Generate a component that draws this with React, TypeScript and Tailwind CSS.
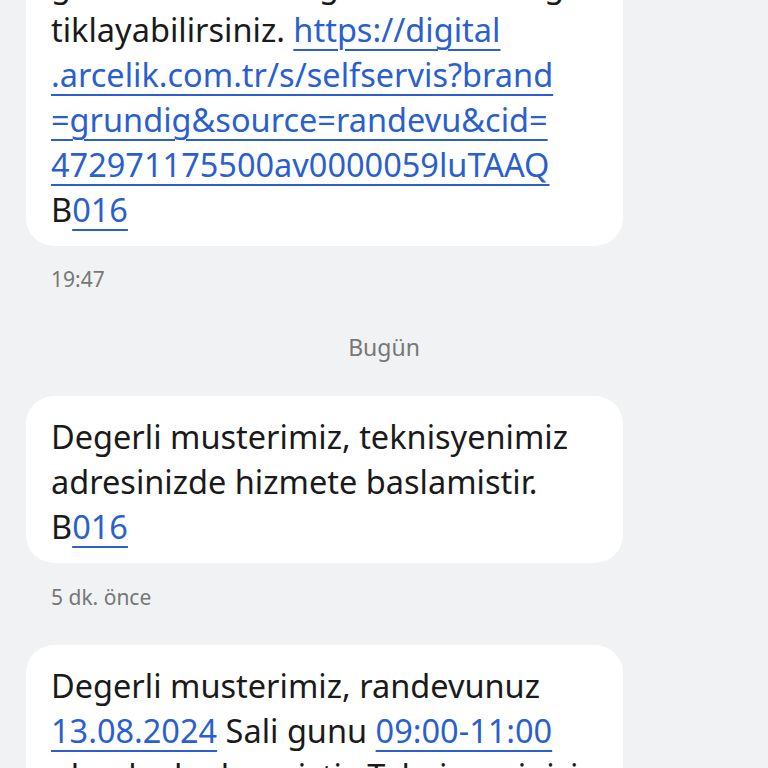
import React from "react";

const font = { fontFamily: "'Noto Sans', Roboto, sans-serif" };

function L({ children }: { children: React.ReactNode }) {
  return (
    <span className="text-[#2b5fd0] underline decoration-[1.5px] underline-offset-[7px]">
      {children}
    </span>
  );
}

function Line({ children }: { children: React.ReactNode }) {
  return <div className="whitespace-nowrap h-[45px] leading-[45px]">{children}</div>;
}

export default function App() {
  return (
    <div
      className="w-[768px] h-[768px] overflow-hidden bg-[#f1f2f4] text-[#1a1a1a]"
      style={font}
    >
      <div className="-mt-[48px] flex flex-col">
        {/* bubble 1 */}
        <div className="ml-[26px] w-[597px] bg-white rounded-[28px] pl-[25px] pt-[10px] pb-[14px] text-[32.5px]">
          <Line>guncelleme ve degisiklik icin asagidaki linke</Line>
          <Line>
            tiklayabilirsiniz. <L>https://digital</L>
          </Line>
          <Line>
            <L>.arcelik.com.tr/s/selfservis?brand</L>
          </Line>
          <Line>
            <L>=grundig&amp;source=randevu&amp;cid=</L>
          </Line>
          <Line>
            <L>472971175500av0000059luTAAQ</L>
          </Line>
          <Line>
            B<L>016</L>
          </Line>
        </div>
        <div className="pl-[51px] mt-[22px] text-[21px] leading-[22px] text-[#777]">19:47</div>
        <div className="text-center mt-[45px] text-[23px] leading-[24px] text-[#777]">Bugün</div>
        {/* bubble 2 */}
        <div className="mt-[37px] ml-[26px] w-[597px] bg-white rounded-[28px] pl-[25px] pt-[18px] pb-[14px] text-[32.5px]">
          <Line>Degerli musterimiz, teknisyenimiz</Line>
          <Line>adresinizde hizmete baslamistir.</Line>
          <Line>
            B<L>016</L>
          </Line>
        </div>
        <div className="pl-[51px] mt-[23px] text-[21px] leading-[22px] text-[#777]">5 dk. önce</div>
        {/* bubble 3 */}
        <div className="mt-[37px] ml-[26px] w-[597px] bg-white rounded-[28px] pl-[25px] pt-[18px] pb-[16px] text-[32.5px]">
          <Line>Degerli musterimiz, randevunuz</Line>
          <Line>
            <L>13.08.2024</L> Sali gunu <L>09:00-11:00</L>
          </Line>
          <Line>olarak planlanmistir. Teknisyeninizi</Line>
          <Line>takip etmek icin linke tiklayabilirsiniz.</Line>
        </div>
      </div>
    </div>
  );
}
